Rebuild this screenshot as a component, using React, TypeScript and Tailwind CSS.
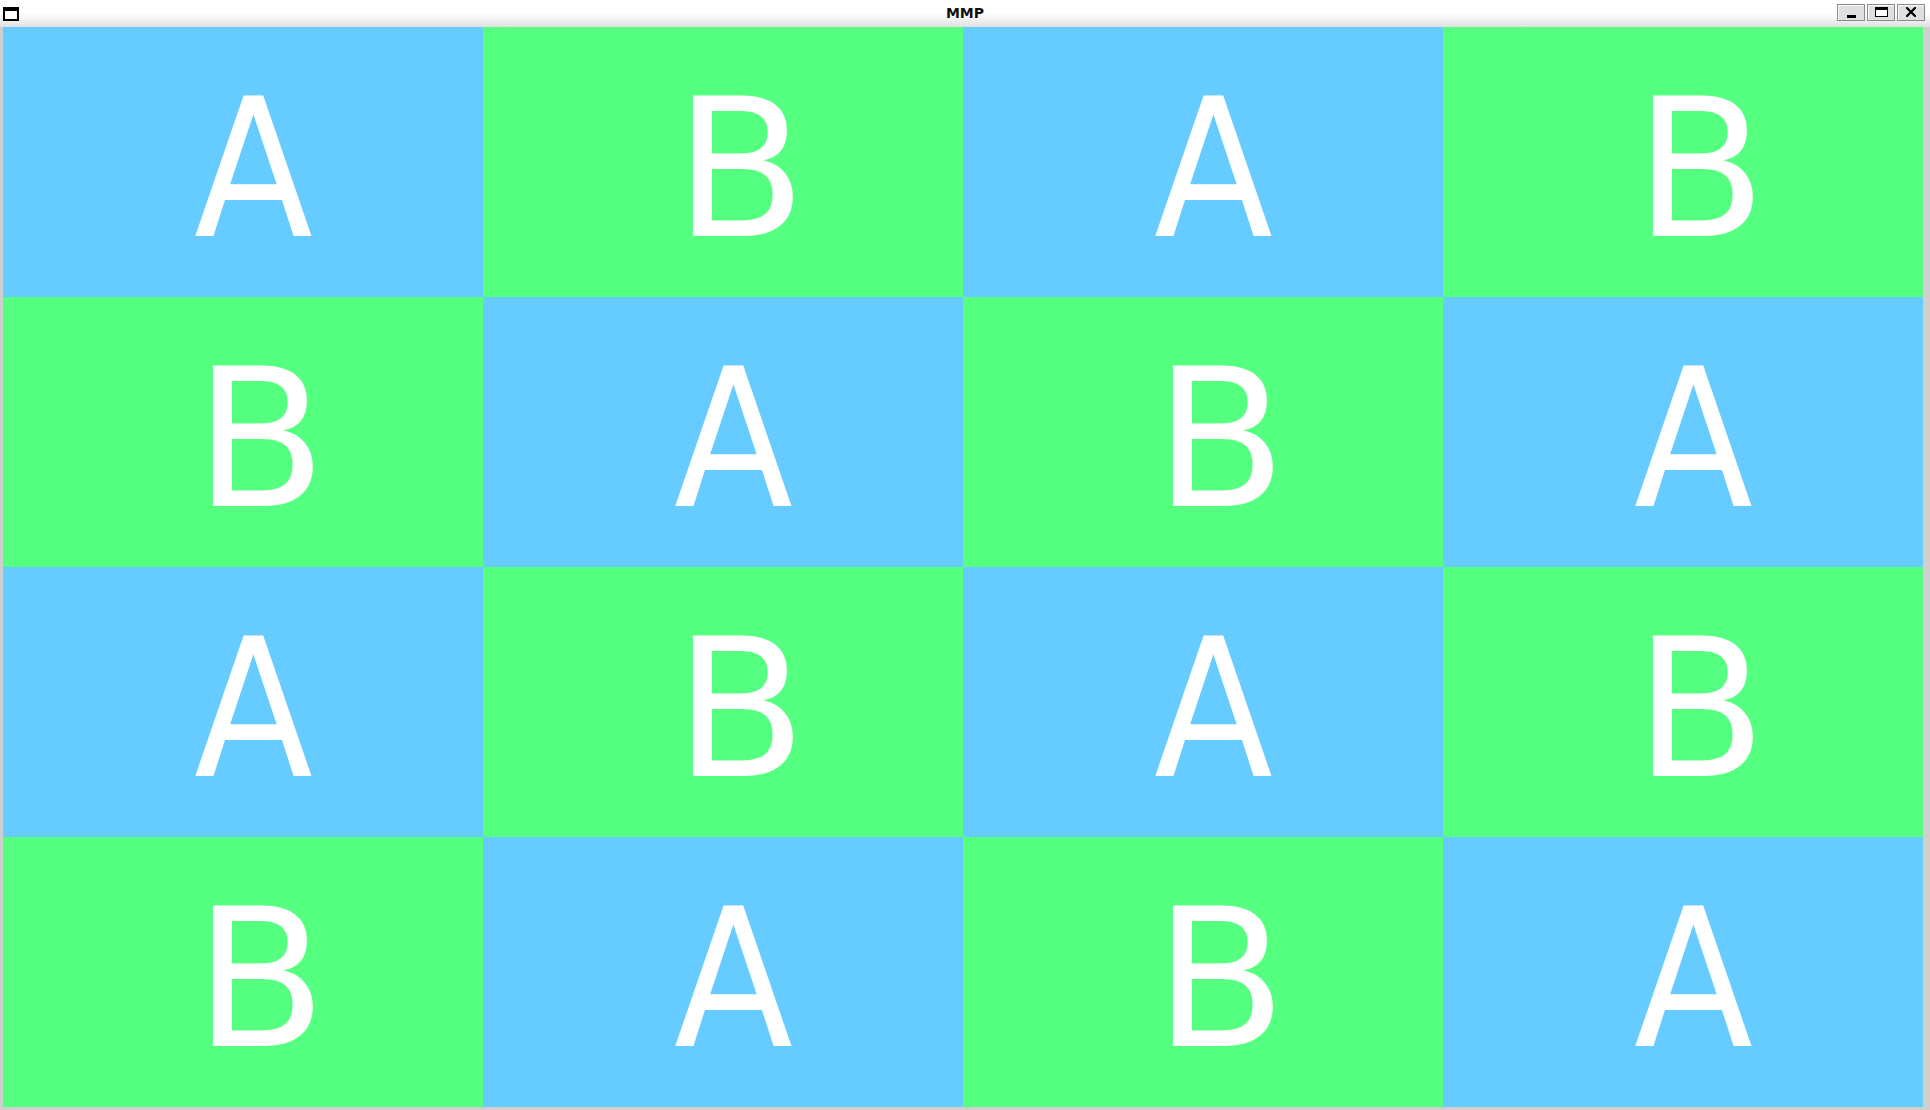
import React from "react";

function TitleButton({ children }: { children: React.ReactNode }) {
  return (
    <div className="w-[28px] h-[17px] bg-[#e0e0e0] border border-[#8a8a8a] shadow-[inset_1px_1px_0_#fafafa] flex items-center justify-center">
      {children}
    </div>
  );
}

export default function App() {
  return (
    <div className="w-[1930px] h-[1110px] bg-[#cfcfcf] flex flex-col overflow-hidden">
      <div className="h-[27px] shrink-0 bg-gradient-to-b from-white from-50% to-[#e0e0e0] flex items-center relative">
        <div className="ml-[3px] mt-[1px] w-[16px] h-[14px] border-2 border-black border-t-[4px] bg-white" />
        <div
          className="absolute inset-x-0 top-0 h-[26px] flex items-center justify-center text-[14px] font-bold text-[#111]"
          style={{ fontFamily: "'DejaVu Sans', sans-serif" }}
        >
          MMP
        </div>
        <div className="ml-auto mr-[5px] mb-[3px] flex gap-[2px]">
          <TitleButton>
            <div className="w-[9px] h-[3px] bg-black mt-[8px]" />
          </TitleButton>
          <TitleButton>
            <div className="w-[13px] h-[10px] border border-black border-t-[3px] bg-white" />
          </TitleButton>
          <TitleButton>
            <svg width="10" height="10" viewBox="0 0 10 10">
              <path d="M1 1 L9 9 M9 1 L1 9" stroke="black" strokeWidth="2.2" strokeLinecap="square" />
            </svg>
          </TitleButton>
        </div>
      </div>
      <div className="grid grid-cols-4 grid-rows-4 w-[1920px] h-[1080px] ml-[3px] shrink-0">
        {Array.from({ length: 16 }).map((_, i) => {
          const r = Math.floor(i / 4);
          const c = i % 4;
          const isA = (r + c) % 2 === 0;
          return (
            <div
              key={i}
              className={`${isA ? "bg-[#66ccff]" : "bg-[#55ff80]"} text-white flex items-start pl-[191px] pt-[46px]`}
            >
              <span
                className="leading-none text-[193px]"
                style={{
                  fontFamily: isA
                    ? "'DejaVu Sans Condensed', 'DejaVu Sans', sans-serif"
                    : "'DejaVu Sans', sans-serif",
                }}
              >
                {isA ? "A" : "B"}
              </span>
            </div>
          );
        })}
      </div>
    </div>
  );
}
